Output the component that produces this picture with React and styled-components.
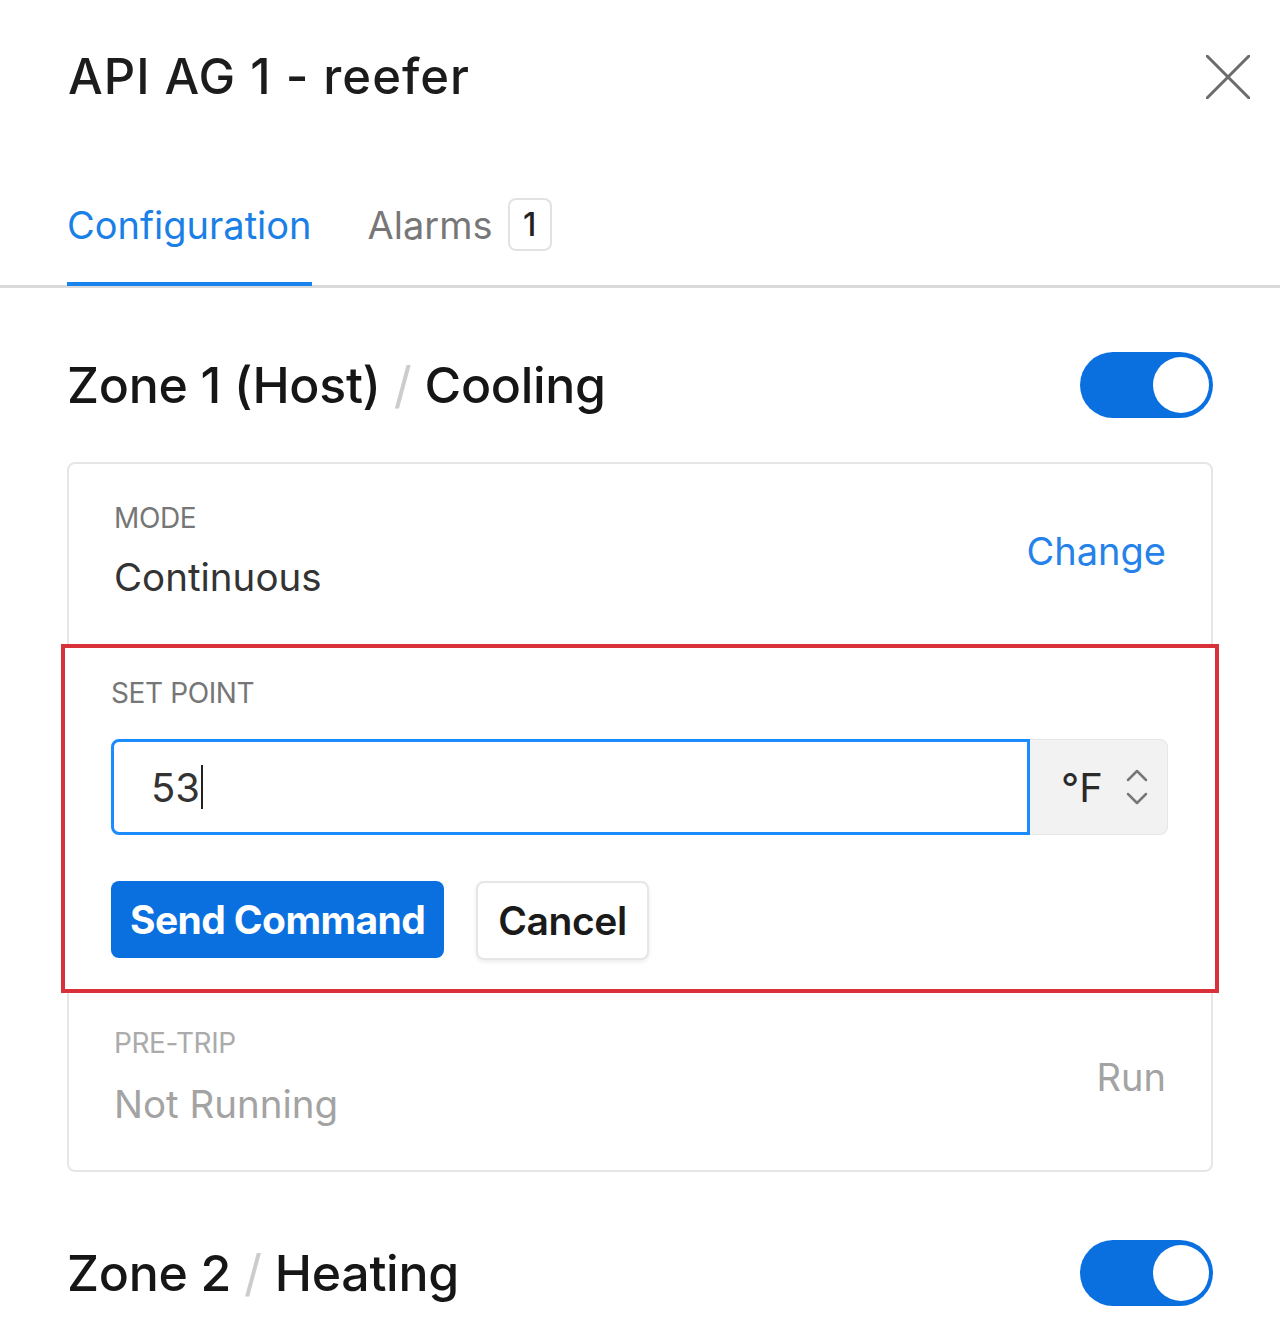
import React from 'react';
import styled, { createGlobalStyle } from 'styled-components';

const GlobalStyle = createGlobalStyle`
  * {
    box-sizing: border-box;
  }

  body {
    margin: 0;
    background: #ffffff;
    font-family: Inter, 'Liberation Sans', Arial, sans-serif;
    color: #1d1d1d;
    -webkit-font-smoothing: antialiased;
  }
`;

const Panel = styled.div`
  width: 1280px;
  min-height: 1328px;
  background: #ffffff;
`;

const Header = styled.header`
  display: flex;
  justify-content: space-between;
  align-items: center;
  padding: 48px 30px 0 68px;
`;

const Title = styled.h1`
  margin: 0;
  font-size: 49px;
  line-height: 58px;
  font-weight: 500;
  color: #1c1c1c;
  letter-spacing: 1px;
`;

const CloseButton = styled.button`
  width: 44px;
  height: 44px;
  padding: 0;
  border: none;
  background: transparent;
  cursor: pointer;

  svg {
    display: block;
  }
`;

const TabBar = styled.nav`
  display: flex;
  gap: 56px;
  margin-top: 92px;
  padding-left: 67px;
  border-bottom: 3px solid #dadada;
`;

const Tab = styled.div`
  display: flex;
  align-items: center;
  gap: 15px;
  padding-bottom: 31px;
  border-bottom: 4px solid ${(p) => (p.$active ? '#1a84ee' : 'transparent')};
  margin-bottom: -1px;
  font-size: 38px;
  line-height: 48px;
  color: ${(p) => (p.$active ? '#1a7fe6' : '#777777')};
  cursor: pointer;
`;

const Badge = styled.span`
  display: inline-flex;
  align-items: center;
  justify-content: center;
  width: 44px;
  height: 53px;
  border: 2px solid #e2e2e2;
  border-radius: 8px;
  font-size: 32px;
  font-weight: 500;
  color: #222222;
`;

const Content = styled.main`
  padding: 64px 67px 0 67px;
`;

const Zone = styled.section`
  & + & {
    margin-top: 68px;
  }
`;

const ZoneHeader = styled.div`
  display: flex;
  justify-content: space-between;
  align-items: center;
`;

const ZoneTitle = styled.h2`
  margin: 0;
  font-size: 50px;
  line-height: 60px;
  font-weight: 500;
  color: #161616;
  letter-spacing: -0.3px;
`;

const Slash = styled.span`
  color: #cccccc;
  font-weight: 400;
`;

const Toggle = styled.button`
  display: flex;
  justify-content: ${(p) => (p.$on ? 'flex-end' : 'flex-start')};
  align-items: center;
  width: 133px;
  height: 66px;
  padding: 0 4px 0 5px;
  border: none;
  border-radius: 33px;
  background: ${(p) => (p.$on ? '#0a70e0' : '#cfcfcf')};
  cursor: pointer;
`;

const Knob = styled.span`
  width: 56px;
  height: 56px;
  border-radius: 50%;
  background: #ffffff;
`;

const Card = styled.div`
  margin-top: 44px;
  border: 2px solid #e6e6e6;
  border-radius: 8px;
  background: #ffffff;
`;

const InfoRow = styled.div`
  display: flex;
  justify-content: space-between;
  align-items: center;
  padding: ${(p) => p.$padding || '37px 45px 43px'};
`;

const FieldLabel = styled.div`
  font-size: 28px;
  line-height: 34px;
  text-transform: uppercase;
  letter-spacing: -0.4px;
  color: ${(p) => (p.$muted ? '#ababab' : '#767676')};
`;

const FieldValue = styled.div`
  margin-top: ${(p) => p.$gap || '18px'};
  font-size: 38.5px;
  line-height: 48px;
  color: ${(p) => (p.$muted ? '#a3a3a3' : '#333333')};
`;

const LinkButton = styled.button`
  padding: 0;
  border: none;
  background: transparent;
  font-family: inherit;
  font-size: 38px;
  line-height: 48px;
  color: ${(p) => (p.$muted ? '#a3a3a3' : '#2582ea')};
  cursor: pointer;
`;

const SetPointBox = styled.div`
  margin: 0 -8px;
  padding: 28px 47px 29px 46px;
  border: 4px solid #d8313a;
  background: #ffffff;
`;

const InputGroup = styled.div`
  display: flex;
  height: 96px;
  margin-top: 29px;
`;

const NumberField = styled.div`
  flex: 1;
  display: flex;
  align-items: center;
  padding-left: 37px;
  border: 3px solid #1a8cff;
  border-radius: 8px 0 0 8px;
  font-size: 40px;
  color: #333333;
`;

const Caret = styled.span`
  display: inline-block;
  width: 2px;
  height: 44px;
  margin-left: 1px;
  background: #222222;
`;

const UnitAddon = styled.div`
  display: flex;
  align-items: center;
  gap: 22px;
  width: 138px;
  padding-left: 31px;
  border: 1px solid #e6e6e6;
  border-left: none;
  border-radius: 0 8px 8px 0;
  background: #f2f2f2;
  font-size: 40px;
  color: #2a2a2a;

  svg {
    display: block;
  }
`;

const ButtonRow = styled.div`
  display: flex;
  align-items: flex-start;
  gap: 32px;
  margin-top: 46px;
`;

const PrimaryButton = styled.button`
  height: 77px;
  padding: 0 19px;
  border: none;
  border-radius: 8px;
  background: #0a70e0;
  color: #ffffff;
  font-family: inherit;
  font-size: 39px;
  font-weight: 700;
  letter-spacing: -0.6px;
  cursor: pointer;
`;

const SecondaryButton = styled.button`
  height: 79px;
  padding: 0 20px;
  border: 2px solid #e6e6e6;
  border-radius: 8px;
  background: #ffffff;
  box-shadow: 0 2px 4px rgba(0, 0, 0, 0.08);
  color: #1a1a1a;
  font-family: inherit;
  font-size: 39px;
  font-weight: 600;
  letter-spacing: -0.4px;
  cursor: pointer;
`;

const CloseIcon = () => (
  <svg width="44" height="44" viewBox="0 0 44 44">
    <path d="M1 1 L43 43 M43 1 L1 43" stroke="#6b6b6b" strokeWidth="3" strokeLinecap="round" />
  </svg>
);

const Chevrons = () => (
  <svg width="24" height="40" viewBox="0 0 24 40">
    <path
      d="M3 13 L12 4 L21 13 M3 27 L12 36 L21 27"
      fill="none"
      stroke="#777777"
      strokeWidth="2.5"
      strokeLinecap="round"
      strokeLinejoin="round"
    />
  </svg>
);

const App = () => {
  return (
    <Panel>
      <GlobalStyle />
      <Header>
        <Title>API AG 1 - reefer</Title>
        <CloseButton aria-label="Close">
          <CloseIcon />
        </CloseButton>
      </Header>

      <TabBar>
        <Tab $active>Configuration</Tab>
        <Tab>
          Alarms
          <Badge>1</Badge>
        </Tab>
      </TabBar>

      <Content>
        <Zone>
          <ZoneHeader>
            <ZoneTitle>
              Zone 1 (Host) <Slash>/</Slash> Cooling
            </ZoneTitle>
            <Toggle $on aria-label="Zone 1 enabled">
              <Knob />
            </Toggle>
          </ZoneHeader>

          <Card>
            <InfoRow>
              <div>
                <FieldLabel>Mode</FieldLabel>
                <FieldValue>Continuous</FieldValue>
              </div>
              <LinkButton>Change</LinkButton>
            </InfoRow>

            <SetPointBox>
              <FieldLabel>Set Point</FieldLabel>
              <InputGroup>
                <NumberField>
                  53
                  <Caret />
                </NumberField>
                <UnitAddon>
                  °F
                  <Chevrons />
                </UnitAddon>
              </InputGroup>
              <ButtonRow>
                <PrimaryButton>Send Command</PrimaryButton>
                <SecondaryButton>Cancel</SecondaryButton>
              </ButtonRow>
            </SetPointBox>

            <InfoRow $padding="33px 45px 42px">
              <div>
                <FieldLabel $muted>Pre-trip</FieldLabel>
                <FieldValue $muted $gap="20px">
                  Not Running
                </FieldValue>
              </div>
              <LinkButton $muted>Run</LinkButton>
            </InfoRow>
          </Card>
        </Zone>

        <Zone>
          <ZoneHeader>
            <ZoneTitle>
              Zone 2 <Slash>/</Slash> Heating
            </ZoneTitle>
            <Toggle $on aria-label="Zone 2 enabled">
              <Knob />
            </Toggle>
          </ZoneHeader>
        </Zone>
      </Content>
    </Panel>
  );
};

export default App;
